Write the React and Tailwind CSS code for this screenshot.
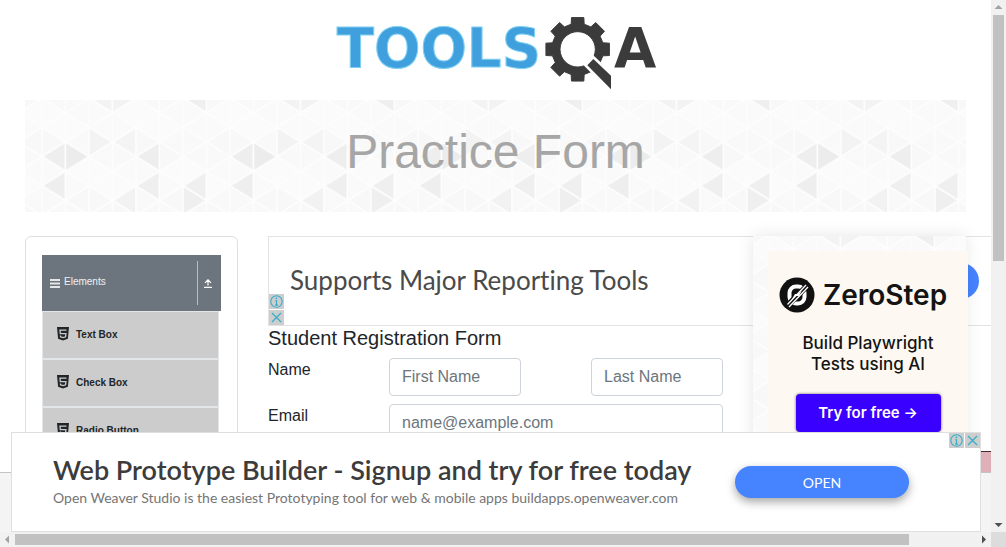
import React from "react";

const COL = 23.5;
const SIDE = 29.3;
const DARK = {
  "0L156": "#eeeeee", "1R156": "#ececec", "0L186": "#eeeeee",
  "4L156": "#eeeeee", "4L186": "#efefef", "6L186": "#efefef",
  "6R200": "#efefef", "3L200": "#f2f2f2", "6L98": "#efefef",
  "2R142": "#f3f3f3", "3L142": "#f4f4f4", "2L98": "#f3f3f3", "3R98": "#f3f3f3",
};
const LIGHT = ["#f9f9f9", "#fbfbfb", "#f8f8f8", "#fafafa"];

function Pattern({ id }) {
  const tris = [];
  const vertexY = (k, m) => (k % 2 === 0 ? -2 : 12.65) + SIDE * m;
  for (let k = 0; k < 8; k++) {
    for (let m = -1; m < 6; m++) {
      const x0 = k * COL;
      const x1 = x0 + COL;
      [["L", x0, x1, vertexY(k, m)], ["R", x1, x0, vertexY(k + 1, m)]].forEach(([dir, tip, base, y]) => {
        const found = Object.keys(DARK).find(
          (n) => n.startsWith(k + dir) && Math.abs(Number(n.slice(2)) - 100 - y) < 4
        );
        const fill = found ? DARK[found] : LIGHT[(k * 3 + m + 4 + (dir === "R" ? 1 : 0)) % 4];
        tris.push(
          <polygon key={k + dir + m} points={`${tip},${y} ${base},${y - SIDE / 2} ${base},${y + SIDE / 2}`} fill={fill} />
        );
      });
    }
  }
  return (
    <svg className="absolute inset-0 h-full w-full" aria-hidden="true">
      <defs>
        <pattern id={id} x="17" y="0" width="188" height="117.2" patternUnits="userSpaceOnUse">
          <g stroke="#fdfdfd" strokeWidth="1.6" strokeLinejoin="round">{tris}</g>
        </pattern>
      </defs>
      <rect width="100%" height="100%" fill={`url(#${id})`} />
    </svg>
  );
}

function gearPath(cx, cy) {
  const pts = [];
  for (let i = 0; i < 8; i++) {
    const a = i * 45;
    [[-14.5, 78], [-11, 97], [11, 97], [14.5, 78]].forEach(([d, r]) => {
      const t = ((a + d) * Math.PI) / 180;
      pts.push(`${(cx + r * Math.cos(t)).toFixed(1)} ${(cy + r * Math.sin(t)).toFixed(1)}`);
    });
  }
  return `M${pts.join("L")}Z M${cx - 53} ${cy}a53 53 0 1 0 106 0a53 53 0 1 0 -106 0Z`;
}

function Logo() {
  return (
    <svg viewBox="33 45 987 231" className="h-[77px] w-[329px]" role="img" aria-label="TOOLSQA">
      <text x="50" y="200" fontSize="164" fontWeight="700" fill="#409fdd" stroke="#7fd0f2" strokeWidth="3" fontFamily="DejaVu Sans, sans-serif">TOOLS</text>
      <path d={gearPath(773, 148)} fill="#3b3b3b" fillRule="evenodd" stroke="#3b3b3b" strokeWidth="3" strokeLinejoin="round" />
      <path d="M820 177L873 227V268L802 196Z" fill="#3b3b3b" stroke="#fff" strokeWidth="16" />
      <path d="M820 177L873 227V268L802 196Z" fill="#3b3b3b" />
      <text x="882" y="200" fontSize="164" fontWeight="700" fill="#3b3b3b" fontFamily="DejaVu Sans, sans-serif">A</text>
    </svg>
  );
}

function AdButtons({ vertical }) {
  return (
    <div className={vertical ? "flex flex-col gap-px" : "flex gap-px"}>
      <button type="button" aria-label="Ad information" className="flex size-[15px] items-center justify-center bg-[#cdcdcd]">
        <svg viewBox="0 0 15 15" className="size-[15px]" fill="none" stroke="#35aecb">
          <circle cx="7.5" cy="7.5" r="5.7" strokeWidth="1.1" />
          <path d="M7.5 6.5v5M6.3 6.7h1.2M6 11.2h3" strokeWidth="1.2" />
          <circle cx="7.4" cy="4.3" r=".5" fill="#35aecb" />
        </svg>
      </button>
      <button type="button" aria-label="Close ad" className="flex size-[15px] items-center justify-center bg-[#cdcdcd]">
        <svg viewBox="0 0 15 15" className="size-[15px]" fill="none" stroke="#35aecb" strokeWidth="1.3">
          <path d="M3 3l9 9M12 3l-9 9" />
        </svg>
      </button>
    </div>
  );
}

function Html5() {
  return (
    <svg viewBox="0 0 12 14" className="h-3.5 w-3" aria-hidden="true">
      <path d="M0 0h12l-1.1 11.7L6 13.6l-4.9-1.9z" fill="#212529" />
      <path d="M9.5 3.2H3l.3 3.4h5.6l-.3 3.2L6 10.6l-2.5-.8-.1-1.3" fill="none" stroke="#ccc" strokeWidth="1.3" />
    </svg>
  );
}

function Sidebar() {
  return (
    <aside className="h-[600px] w-[213px] shrink-0 rounded-md border border-[#dfdfdf] px-4 pt-[18px]">
      <button type="button" className="flex h-14 w-full items-center bg-[#6c757d] pr-[9px] pl-2 text-[10px] text-white/90">
        <svg viewBox="0 0 10 9" className="mr-1 h-[9px] w-2.5" aria-hidden="true" stroke="#e4e6e8" strokeWidth="2">
          <path d="M0 1h10M0 4.5h10M0 8h10" />
        </svg>
        <span className="flex-1 pb-1 text-left">Elements</span>
        <span className="h-11 border-l border-[#b9bdc1] pr-1.5" />
        <svg viewBox="0 0 8 9" className="h-[9px] w-2" aria-hidden="true" stroke="#fff" fill="none">
          <path d="M4 6.5V1M1 3.8l3-3 3 3M0 8.3h8" strokeWidth="1.2" />
        </svg>
      </button>
      <ul className="mr-0.5 text-[10px] font-bold text-[#212529]">
        {["Text Box", "Check Box", "Radio Button"].map((t) => (
          <li key={t} className="h-12 border border-[#e3e6e8] bg-[#ccc]">
            <a href="#" className="flex h-full items-center gap-[7px] pb-0.5 pl-3.5">
              <Html5 />
              {t}
            </a>
          </li>
        ))}
      </ul>
    </aside>
  );
}

const field = "h-[38px] rounded border border-[#ced4da] bg-white px-3 text-base placeholder:text-[#6c757d]";

function RegistrationForm() {
  return (
    <form>
      <h2 className="mb-2 text-xl leading-6">Student Registration Form</h2>
      <div className="mb-2 flex">
        <label htmlFor="first" className="w-[121px] shrink-0 leading-6">Name</label>
        <div className="flex flex-1 justify-between">
          <input id="first" placeholder="First Name" className={`${field} w-[132px]`} />
          <input aria-label="Last Name" placeholder="Last Name" className={`${field} w-[132px]`} />
        </div>
      </div>
      <div className="flex">
        <label htmlFor="email" className="w-[121px] shrink-0 leading-6">Email</label>
        <input id="email" type="email" placeholder="name@example.com" className={`${field} min-w-0 flex-1`} />
      </div>
    </form>
  );
}

function ZeroStepAd() {
  return (
    <aside className="relative z-10 w-[213px] shrink-0 bg-[#fafafa] pt-[15px] pl-[15px] shadow-[0_0_16px_rgba(0,0,0,0.1)]">
      <Pattern id="side" />
      <div className="relative flex h-[500px] w-[200px] flex-col items-center bg-[#fdf9f2] pt-6 font-[Inter,sans-serif] text-[#141414]">
        <div className="mr-2.5 flex h-10 items-center gap-2">
          <svg viewBox="0 0 36 36" className="size-9" aria-hidden="true">
            <circle cx="18" cy="18" r="17.5" fill="#111" />
            <rect x="10.5" y="9.5" width="15" height="17" rx="6.5" fill="none" stroke="#fff" strokeWidth="4" />
            <path d="M8 29L29 8" stroke="#111" strokeWidth="6" />
            <path d="M8.5 27.5L27 8M10 30L29 10" stroke="#fff" strokeWidth="1.3" />
            <path d="M13 22l3-5 3 0 4-4-3 6-3 0z" fill="#fff" />
          </svg>
          <span className="text-[28px] leading-9 font-semibold">ZeroStep</span>
        </div>
        <p className="mt-[18px] text-center text-[17px] leading-[21px] font-medium">
          Build Playwright
          <br />
          Tests using AI
        </p>
        <button type="button" className="mt-[19px] h-[38px] w-[145px] rounded bg-[#3a00ff] text-[15px] font-semibold text-white shadow-[0_0_3px_rgba(0,0,0,0.6)]">
          Try for free →
        </button>
      </div>
    </aside>
  );
}

function BottomAd() {
  return (
    <section className="absolute right-2.5 bottom-0 left-[11px] z-20 flex h-[100px] items-center border border-[#dfdfdf] bg-white pr-[71px] pl-[41px] font-[Lato,sans-serif] [font-variant-ligatures:none]">
      <div className="flex-1 whitespace-nowrap">
        <h2 className="text-[27px] leading-8 font-semibold text-[#3c3c3c]">Web Prototype Builder - Signup and try for free today</h2>
        <p className="text-[14px] leading-6 text-[#757575]">
          Open Weaver Studio is the easiest Prototyping tool for web &amp; mobile apps buildapps.openweaver.com
        </p>
      </div>
      <button type="button" className="h-8 w-[174px] rounded-full bg-[#4683ff] text-[14px] text-white shadow-[0_4px_10px_rgba(0,0,0,0.35)]">OPEN</button>
      <div className="absolute top-0 right-0">
        <AdButtons />
      </div>
    </section>
  );
}

function Arrow({ d, color }) {
  return (
    <svg viewBox="0 0 15 15" className="size-[15px] shrink-0" aria-hidden="true">
      <path d={d} fill={color} />
    </svg>
  );
}

export default function App() {
  return (
    <div className="grid h-screen grid-cols-[1fr_15px] grid-rows-[1fr_15px] bg-white font-['Liberation_Sans',sans-serif] text-base text-[#212529]">
      <div className="relative min-h-0 min-w-0 overflow-hidden">
        <header className="flex h-[100px] justify-center pt-[15px]">
          <Logo />
        </header>
        <main className="px-[25px]">
          <div className="relative flex h-28 items-center justify-center bg-[#fafafa]">
            <Pattern id="banner" />
            <h1 className="relative pb-2 text-5xl text-[#a6a6a6]">Practice Form</h1>
          </div>
          <div className="mt-6 flex gap-[30px]">
            <Sidebar />
            <div className="min-w-0 flex-1">
              <section className="relative flex h-[90px] w-[728px] items-center border border-[#e3e3e3] bg-white pr-3 pl-[21px] font-[Lato,sans-serif] [font-variant-ligatures:none]">
                <h2 className="flex-1 pb-0.5 text-[26px] leading-8 text-[#4a4a4a]">Supports Major Reporting Tools</h2>
                <button type="button" aria-label="Open" className="mr-1 h-9 w-[140px] rounded-full bg-[#4683ff]" />
                <div className="absolute bottom-0 left-0">
                  <AdButtons vertical />
                </div>
              </section>
              <RegistrationForm />
            </div>
            <ZeroStepAd />
          </div>
        </main>
        <footer className="absolute inset-x-0 bottom-0 h-[60px] border-t border-[#c4c4c4] bg-[#f4f4f4]" />
        <div className="absolute right-0 bottom-[60px] h-[21px] w-2.5 border-t border-[#432a30] bg-[#dfb0b8]" />
        <BottomAd />
      </div>
      <div className="flex flex-col bg-[#f1f1f1]">
        <Arrow d="M7.5 5l4 4h-8z" color="#a3a3a3" />
        <div className="flex-1">
          <div className="mx-0.5 h-[49%] bg-[#c1c1c1]" />
        </div>
        <Arrow d="M7.5 10l4-4h-8z" color="#505050" />
      </div>
      <div className="flex bg-[#f1f1f1]">
        <Arrow d="M5 7.5l4-4v8z" color="#a3a3a3" />
        <div className="flex-1 py-0.5">
          <div className="h-full w-[93%] bg-[#c1c1c1]" />
        </div>
        <Arrow d="M10 7.5l-4-4v8z" color="#505050" />
      </div>
      <div className="bg-[#dcdcdc]" />
    </div>
  );
}
